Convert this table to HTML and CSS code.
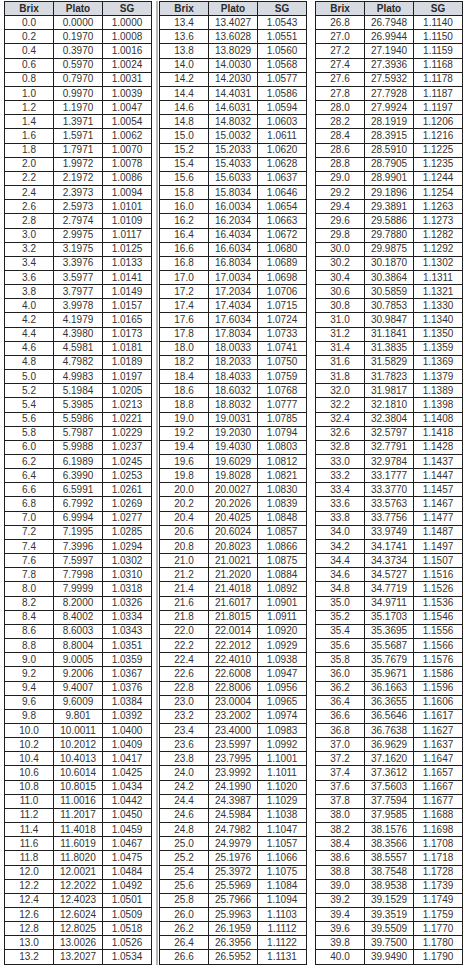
FILE: index.html
```html
<!DOCTYPE html>
<html>
<head>
<meta charset="utf-8">
<title>Brix Plato SG</title>
<link rel="stylesheet" href="styles.css">
</head>
<body>
<div class="page">
<div class="t">
<b>Brix</b><b>Plato</b><b>SG</b>
<span>0.0</span><span>0.0000</span><span>1.0000</span>
<span>0.2</span><span>0.1970</span><span>1.0008</span>
<span>0.4</span><span>0.3970</span><span>1.0016</span>
<span>0.6</span><span>0.5970</span><span>1.0024</span>
<span>0.8</span><span>0.7970</span><span>1.0031</span>
<span>1.0</span><span>0.9970</span><span>1.0039</span>
<span>1.2</span><span>1.1970</span><span>1.0047</span>
<span>1.4</span><span>1.3971</span><span>1.0054</span>
<span>1.6</span><span>1.5971</span><span>1.0062</span>
<span>1.8</span><span>1.7971</span><span>1.0070</span>
<span>2.0</span><span>1.9972</span><span>1.0078</span>
<span>2.2</span><span>2.1972</span><span>1.0086</span>
<span>2.4</span><span>2.3973</span><span>1.0094</span>
<span>2.6</span><span>2.5973</span><span>1.0101</span>
<span>2.8</span><span>2.7974</span><span>1.0109</span>
<span>3.0</span><span>2.9975</span><span>1.0117</span>
<span>3.2</span><span>3.1975</span><span>1.0125</span>
<span>3.4</span><span>3.3976</span><span>1.0133</span>
<span>3.6</span><span>3.5977</span><span>1.0141</span>
<span>3.8</span><span>3.7977</span><span>1.0149</span>
<span>4.0</span><span>3.9978</span><span>1.0157</span>
<span>4.2</span><span>4.1979</span><span>1.0165</span>
<span>4.4</span><span>4.3980</span><span>1.0173</span>
<span>4.6</span><span>4.5981</span><span>1.0181</span>
<span>4.8</span><span>4.7982</span><span>1.0189</span>
<span>5.0</span><span>4.9983</span><span>1.0197</span>
<span>5.2</span><span>5.1984</span><span>1.0205</span>
<span>5.4</span><span>5.3985</span><span>1.0213</span>
<span>5.6</span><span>5.5986</span><span>1.0221</span>
<span>5.8</span><span>5.7987</span><span>1.0229</span>
<span>6.0</span><span>5.9988</span><span>1.0237</span>
<span>6.2</span><span>6.1989</span><span>1.0245</span>
<span>6.4</span><span>6.3990</span><span>1.0253</span>
<span>6.6</span><span>6.5991</span><span>1.0261</span>
<span>6.8</span><span>6.7992</span><span>1.0269</span>
<span>7.0</span><span>6.9994</span><span>1.0277</span>
<span>7.2</span><span>7.1995</span><span>1.0285</span>
<span>7.4</span><span>7.3996</span><span>1.0294</span>
<span>7.6</span><span>7.5997</span><span>1.0302</span>
<span>7.8</span><span>7.7998</span><span>1.0310</span>
<span>8.0</span><span>7.9999</span><span>1.0318</span>
<span>8.2</span><span>8.2000</span><span>1.0326</span>
<span>8.4</span><span>8.4002</span><span>1.0334</span>
<span>8.6</span><span>8.6003</span><span>1.0343</span>
<span>8.8</span><span>8.8004</span><span>1.0351</span>
<span>9.0</span><span>9.0005</span><span>1.0359</span>
<span>9.2</span><span>9.2006</span><span>1.0367</span>
<span>9.4</span><span>9.4007</span><span>1.0376</span>
<span>9.6</span><span>9.6009</span><span>1.0384</span>
<span>9.8</span><span>9.801</span><span>1.0392</span>
<span>10.0</span><span>10.0011</span><span>1.0400</span>
<span>10.2</span><span>10.2012</span><span>1.0409</span>
<span>10.4</span><span>10.4013</span><span>1.0417</span>
<span>10.6</span><span>10.6014</span><span>1.0425</span>
<span>10.8</span><span>10.8015</span><span>1.0434</span>
<span>11.0</span><span>11.0016</span><span>1.0442</span>
<span>11.2</span><span>11.2017</span><span>1.0450</span>
<span>11.4</span><span>11.4018</span><span>1.0459</span>
<span>11.6</span><span>11.6019</span><span>1.0467</span>
<span>11.8</span><span>11.8020</span><span>1.0475</span>
<span>12.0</span><span>12.0021</span><span>1.0484</span>
<span>12.2</span><span>12.2022</span><span>1.0492</span>
<span>12.4</span><span>12.4023</span><span>1.0501</span>
<span>12.6</span><span>12.6024</span><span>1.0509</span>
<span>12.8</span><span>12.8025</span><span>1.0518</span>
<span>13.0</span><span>13.0026</span><span>1.0526</span>
<span>13.2</span><span>13.2027</span><span>1.0534</span>
</div>
<div class="sep"></div>
<div class="t">
<b>Brix</b><b>Plato</b><b>SG</b>
<span>13.4</span><span>13.4027</span><span>1.0543</span>
<span>13.6</span><span>13.6028</span><span>1.0551</span>
<span>13.8</span><span>13.8029</span><span>1.0560</span>
<span>14.0</span><span>14.0030</span><span>1.0568</span>
<span>14.2</span><span>14.2030</span><span>1.0577</span>
<span>14.4</span><span>14.4031</span><span>1.0586</span>
<span>14.6</span><span>14.6031</span><span>1.0594</span>
<span>14.8</span><span>14.8032</span><span>1.0603</span>
<span>15.0</span><span>15.0032</span><span>1.0611</span>
<span>15.2</span><span>15.2033</span><span>1.0620</span>
<span>15.4</span><span>15.4033</span><span>1.0628</span>
<span>15.6</span><span>15.6033</span><span>1.0637</span>
<span>15.8</span><span>15.8034</span><span>1.0646</span>
<span>16.0</span><span>16.0034</span><span>1.0654</span>
<span>16.2</span><span>16.2034</span><span>1.0663</span>
<span>16.4</span><span>16.4034</span><span>1.0672</span>
<span>16.6</span><span>16.6034</span><span>1.0680</span>
<span>16.8</span><span>16.8034</span><span>1.0689</span>
<span>17.0</span><span>17.0034</span><span>1.0698</span>
<span>17.2</span><span>17.2034</span><span>1.0706</span>
<span>17.4</span><span>17.4034</span><span>1.0715</span>
<span>17.6</span><span>17.6034</span><span>1.0724</span>
<span>17.8</span><span>17.8034</span><span>1.0733</span>
<span>18.0</span><span>18.0033</span><span>1.0741</span>
<span>18.2</span><span>18.2033</span><span>1.0750</span>
<span>18.4</span><span>18.4033</span><span>1.0759</span>
<span>18.6</span><span>18.6032</span><span>1.0768</span>
<span>18.8</span><span>18.8032</span><span>1.0777</span>
<span>19.0</span><span>19.0031</span><span>1.0785</span>
<span>19.2</span><span>19.2030</span><span>1.0794</span>
<span>19.4</span><span>19.4030</span><span>1.0803</span>
<span>19.6</span><span>19.6029</span><span>1.0812</span>
<span>19.8</span><span>19.8028</span><span>1.0821</span>
<span>20.0</span><span>20.0027</span><span>1.0830</span>
<span>20.2</span><span>20.2026</span><span>1.0839</span>
<span>20.4</span><span>20.4025</span><span>1.0848</span>
<span>20.6</span><span>20.6024</span><span>1.0857</span>
<span>20.8</span><span>20.8023</span><span>1.0866</span>
<span>21.0</span><span>21.0021</span><span>1.0875</span>
<span>21.2</span><span>21.2020</span><span>1.0884</span>
<span>21.4</span><span>21.4018</span><span>1.0892</span>
<span>21.6</span><span>21.6017</span><span>1.0901</span>
<span>21.8</span><span>21.8015</span><span>1.0911</span>
<span>22.0</span><span>22.0014</span><span>1.0920</span>
<span>22.2</span><span>22.2012</span><span>1.0929</span>
<span>22.4</span><span>22.4010</span><span>1.0938</span>
<span>22.6</span><span>22.6008</span><span>1.0947</span>
<span>22.8</span><span>22.8006</span><span>1.0956</span>
<span>23.0</span><span>23.0004</span><span>1.0965</span>
<span>23.2</span><span>23.2002</span><span>1.0974</span>
<span>23.4</span><span>23.4000</span><span>1.0983</span>
<span>23.6</span><span>23.5997</span><span>1.0992</span>
<span>23.8</span><span>23.7995</span><span>1.1001</span>
<span>24.0</span><span>23.9992</span><span>1.1011</span>
<span>24.2</span><span>24.1990</span><span>1.1020</span>
<span>24.4</span><span>24.3987</span><span>1.1029</span>
<span>24.6</span><span>24.5984</span><span>1.1038</span>
<span>24.8</span><span>24.7982</span><span>1.1047</span>
<span>25.0</span><span>24.9979</span><span>1.1057</span>
<span>25.2</span><span>25.1976</span><span>1.1066</span>
<span>25.4</span><span>25.3972</span><span>1.1075</span>
<span>25.6</span><span>25.5969</span><span>1.1084</span>
<span>25.8</span><span>25.7966</span><span>1.1094</span>
<span>26.0</span><span>25.9963</span><span>1.1103</span>
<span>26.2</span><span>26.1959</span><span>1.1112</span>
<span>26.4</span><span>26.3956</span><span>1.1122</span>
<span>26.6</span><span>26.5952</span><span>1.1131</span>
</div>
<div class="t last">
<b>Brix</b><b>Plato</b><b>SG</b>
<span>26.8</span><span>26.7948</span><span>1.1140</span>
<span>27.0</span><span>26.9944</span><span>1.1150</span>
<span>27.2</span><span>27.1940</span><span>1.1159</span>
<span>27.4</span><span>27.3936</span><span>1.1168</span>
<span>27.6</span><span>27.5932</span><span>1.1178</span>
<span>27.8</span><span>27.7928</span><span>1.1187</span>
<span>28.0</span><span>27.9924</span><span>1.1197</span>
<span>28.2</span><span>28.1919</span><span>1.1206</span>
<span>28.4</span><span>28.3915</span><span>1.1216</span>
<span>28.6</span><span>28.5910</span><span>1.1225</span>
<span>28.8</span><span>28.7905</span><span>1.1235</span>
<span>29.0</span><span>28.9901</span><span>1.1244</span>
<span>29.2</span><span>29.1896</span><span>1.1254</span>
<span>29.4</span><span>29.3891</span><span>1.1263</span>
<span>29.6</span><span>29.5886</span><span>1.1273</span>
<span>29.8</span><span>29.7880</span><span>1.1282</span>
<span>30.0</span><span>29.9875</span><span>1.1292</span>
<span>30.2</span><span>30.1870</span><span>1.1302</span>
<span>30.4</span><span>30.3864</span><span>1.1311</span>
<span>30.6</span><span>30.5859</span><span>1.1321</span>
<span>30.8</span><span>30.7853</span><span>1.1330</span>
<span>31.0</span><span>30.9847</span><span>1.1340</span>
<span>31.2</span><span>31.1841</span><span>1.1350</span>
<span>31.4</span><span>31.3835</span><span>1.1359</span>
<span>31.6</span><span>31.5829</span><span>1.1369</span>
<span>31.8</span><span>31.7823</span><span>1.1379</span>
<span>32.0</span><span>31.9817</span><span>1.1389</span>
<span>32.2</span><span>32.1810</span><span>1.1398</span>
<span>32.4</span><span>32.3804</span><span>1.1408</span>
<span>32.6</span><span>32.5797</span><span>1.1418</span>
<span>32.8</span><span>32.7791</span><span>1.1428</span>
<span>33.0</span><span>32.9784</span><span>1.1437</span>
<span>33.2</span><span>33.1777</span><span>1.1447</span>
<span>33.4</span><span>33.3770</span><span>1.1457</span>
<span>33.6</span><span>33.5763</span><span>1.1467</span>
<span>33.8</span><span>33.7756</span><span>1.1477</span>
<span>34.0</span><span>33.9749</span><span>1.1487</span>
<span>34.2</span><span>34.1741</span><span>1.1497</span>
<span>34.4</span><span>34.3734</span><span>1.1507</span>
<span>34.6</span><span>34.5727</span><span>1.1516</span>
<span>34.8</span><span>34.7719</span><span>1.1526</span>
<span>35.0</span><span>34.9711</span><span>1.1536</span>
<span>35.2</span><span>35.1703</span><span>1.1546</span>
<span>35.4</span><span>35.3695</span><span>1.1556</span>
<span>35.6</span><span>35.5687</span><span>1.1566</span>
<span>35.8</span><span>35.7679</span><span>1.1576</span>
<span>36.0</span><span>35.9671</span><span>1.1586</span>
<span>36.2</span><span>36.1663</span><span>1.1596</span>
<span>36.4</span><span>36.3655</span><span>1.1606</span>
<span>36.6</span><span>36.5646</span><span>1.1617</span>
<span>36.8</span><span>36.7638</span><span>1.1627</span>
<span>37.0</span><span>36.9629</span><span>1.1637</span>
<span>37.2</span><span>37.1620</span><span>1.1647</span>
<span>37.4</span><span>37.3612</span><span>1.1657</span>
<span>37.6</span><span>37.5603</span><span>1.1667</span>
<span>37.8</span><span>37.7594</span><span>1.1677</span>
<span>38.0</span><span>37.9585</span><span>1.1688</span>
<span>38.2</span><span>38.1576</span><span>1.1698</span>
<span>38.4</span><span>38.3566</span><span>1.1708</span>
<span>38.6</span><span>38.5557</span><span>1.1718</span>
<span>38.8</span><span>38.7548</span><span>1.1728</span>
<span>39.0</span><span>38.9538</span><span>1.1739</span>
<span>39.2</span><span>39.1529</span><span>1.1749</span>
<span>39.4</span><span>39.3519</span><span>1.1759</span>
<span>39.6</span><span>39.5509</span><span>1.1770</span>
<span>39.8</span><span>39.7500</span><span>1.1780</span>
<span>40.0</span><span>39.9490</span><span>1.1790</span>
</div>
</div>
</body>
</html>
```

FILE: styles.css
```css
html, body {
  margin: 0;
  padding: 0;
  background: #ffffff;
}

.page {
  display: flex;
  align-items: flex-start;
  padding: 1px 0 0 4px;
  font-family: "Liberation Sans", Arial, sans-serif;
  font-size: 10px;
  color: #333333;
}

.t {
  display: grid;
  grid-template-columns: repeat(3, 1fr);
  grid-auto-rows: 13.17px;
  gap: 1px;
  width: 148px;
  box-sizing: border-box;
  background: #1e1e1e;
  border: 1px solid #1e1e1e;
}

.t.last {
  margin-left: 8px;
}

.t span,
.t b {
  display: flex;
  align-items: center;
  justify-content: center;
  background: #ffffff;
  line-height: 1;
  white-space: nowrap;
}

.t b {
  background: #d7dbe1;
  font-weight: bold;
  color: #2a2a2a;
}

.sep {
  align-self: stretch;
  width: 2px;
  margin: 0 1px 0 4px;
  background: #b8b8b8;
}
```
